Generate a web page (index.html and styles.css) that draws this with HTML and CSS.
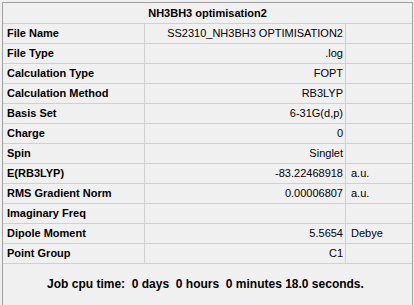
FILE: index.html
```html
<!DOCTYPE html>
<html>
<head>
<meta charset="utf-8">
<link rel="stylesheet" href="styles.css">
</head>
<body>
<div class="panel">
  <div class="grid">
    <div class="cell title">NH3BH3 optimisation2</div>

    <div class="cell label">File Name</div>
    <div class="cell value">SS2310_NH3BH3 OPTIMISATION2</div>
    <div class="cell unit"></div>

    <div class="cell label">File Type</div>
    <div class="cell value">.log</div>
    <div class="cell unit"></div>

    <div class="cell label">Calculation Type</div>
    <div class="cell value">FOPT</div>
    <div class="cell unit"></div>

    <div class="cell label">Calculation Method</div>
    <div class="cell value">RB3LYP</div>
    <div class="cell unit"></div>

    <div class="cell label">Basis Set</div>
    <div class="cell value">6-31G(d,p)</div>
    <div class="cell unit"></div>

    <div class="cell label">Charge</div>
    <div class="cell value">0</div>
    <div class="cell unit"></div>

    <div class="cell label">Spin</div>
    <div class="cell value">Singlet</div>
    <div class="cell unit"></div>

    <div class="cell label">E(RB3LYP)</div>
    <div class="cell value">-83.22468918</div>
    <div class="cell unit">a.u.</div>

    <div class="cell label">RMS Gradient Norm</div>
    <div class="cell value">0.00006807</div>
    <div class="cell unit">a.u.</div>

    <div class="cell label">Imaginary Freq</div>
    <div class="cell value"></div>
    <div class="cell unit"></div>

    <div class="cell label">Dipole Moment</div>
    <div class="cell value">5.5654</div>
    <div class="cell unit">Debye</div>

    <div class="cell label">Point Group</div>
    <div class="cell value">C1</div>
    <div class="cell unit"></div>

    <div class="cell footer">Job cpu time:  0 days  0 hours  0 minutes 18.0 seconds.</div>
  </div>
</div>
</body>
</html>
```

FILE: styles.css
```css
html, body {
  margin: 0;
  padding: 0;
  background: #f0f0f0;
  overflow: hidden;
}

body {
  font-family: "Liberation Sans", Arial, sans-serif;
  font-size: 11px;
  color: #000;
}

.panel {
  margin: 2px 0 0 2px;
  width: 409px;
  border: 1px solid #a0a0a0;
  border-bottom: none;
}

.grid {
  display: grid;
  grid-template-columns: 141px 200px 66px;
  grid-template-rows: 20px repeat(12, 19px) 41px;
  gap: 1px;
  background: #d0d0d0;
}

.cell {
  background: #f0f0f0;
  line-height: 19px;
  white-space: pre;
  overflow: hidden;
}

.title {
  grid-column: 1 / 4;
  text-align: center;
  font-weight: bold;
  line-height: 20px;
}

.label {
  font-weight: bold;
  padding-left: 4px;
}

.value {
  text-align: right;
  padding-right: 2px;
}

.unit {
  padding-left: 5px;
}

.footer {
  grid-column: 1 / 4;
  display: flex;
  align-items: center;
  justify-content: center;
  font-weight: bold;
  font-size: 12px;
  padding-right: 4px;
}
```
